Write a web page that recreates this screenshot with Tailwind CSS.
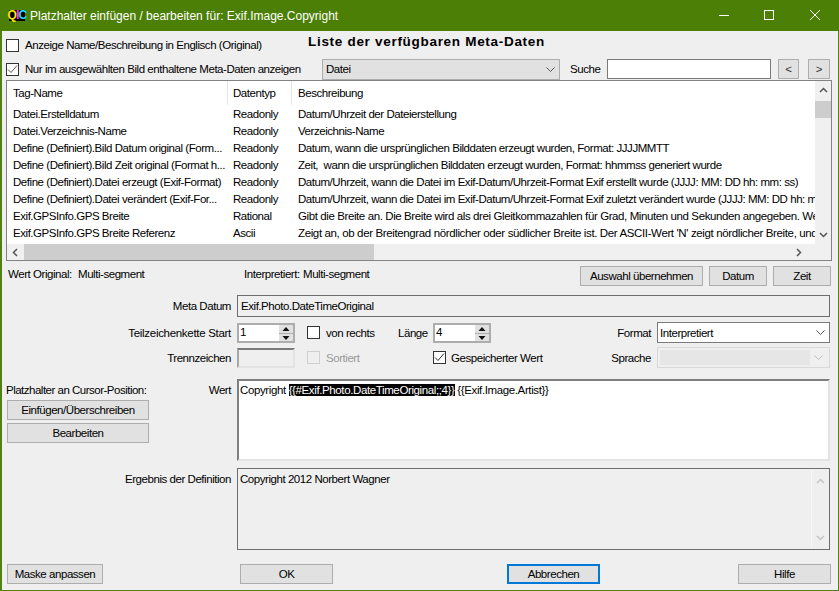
<!DOCTYPE html>
<html lang="de">

<head>
    <meta charset="UTF-8">
    <title>Platzhalter einfügen / bearbeiten</title>
    <script src="https://cdn.jsdelivr.net/npm/@tailwindcss/browser@4"></script>
</head>

<body class="w-[839px] h-[591px] overflow-hidden bg-[#efefef] font-['Liberation_Sans',sans-serif] text-[11.500px] tracking-[-0.45px] leading-[14px] text-black whitespace-nowrap">
    <div class="w-[839px] h-[591px] flex flex-col border-x border-b border-[#4f8211] border-l-2">
        <!-- Title bar -->
        <div class="h-[31px] -ml-[2px] -mr-px bg-[#4b7f05] flex items-center text-white shrink-0 tracking-normal">
            <div class="ml-[9px] w-[16px] h-[11px] bg-black flex items-center justify-center font-bold text-[12px] leading-[11px] tracking-[-0.8px]">
                <span class="text-[#ffe600]">Q</span><span class="text-[#ff3fd0]">I</span><span class="text-[#27d8ff]">C</span>
            </div>
            <span class="ml-[5px] text-[12px]">Platzhalter einfügen / bearbeiten für: Exif.Image.Copyright</span>
            <div class="ml-auto flex items-center">
                <svg class="w-[46px] h-[31px]" viewBox="0 0 46 31"><path d="M18 15.500h10" stroke="#fff" /></svg>
                <svg class="w-[46px] h-[31px]" viewBox="0 0 46 31"><rect x="17.500" y="10.500" width="9" height="9" fill="none" stroke="#fff" /></svg>
                <svg class="w-[46px] h-[31px]" viewBox="0 0 46 31"><path d="M17 10l10 10M27 10l-10 10" stroke="#fff" /></svg>
            </div>
        </div>

        <!-- Top options -->
        <div class="h-[27px] flex items-center pl-[4px] shrink-0">
            <span class="w-[13px] h-[13px] border border-[#333] bg-white mt-[1px] shrink-0"></span>
            <span class="ml-[6px] w-[283px] shrink-0">Anzeige Name/Beschreibung in Englisch (Original)</span>
            <span class="font-bold text-[13.500px] tracking-[0.7px] -mt-[5px]">Liste der verfügbaren Meta-Daten</span>
        </div>
        <div class="h-[22px] flex items-center pl-[4px] shrink-0 *:shrink-0">
            <span class="w-[13px] h-[13px] border border-[#333] bg-white flex items-center justify-center">
                <svg class="w-[11px] h-[11px]" viewBox="0 0 11 11"><path d="M1 5.500l3 3 6-7" fill="none" stroke="#555" /></svg>
            </span>
            <span class="ml-[6px] w-[297px]">Nur im ausgewählten Bild enthaltene Meta-Daten anzeigen</span>
            <div class="w-[238px] h-[21px] bg-[#e1e1e1] border border-[#adadad] flex items-center justify-between pl-[3px] pr-[4px]">
                <span>Datei</span>
                <svg class="w-[9px] h-[5px]" viewBox="0 0 9 5"><path d="M0.500 0.500l4 4 4-4" fill="none" stroke="#555" /></svg>
            </div>
            <span class="ml-[10px] w-[37px]">Suche</span>
            <div class="w-[164px] h-[20px] bg-white border border-[#7a7a7a]"></div>
            <button class="ml-[7px] w-[21px] h-[20px] bg-[#e1e1e1] border border-[#adadad] text-[#333]">&lt;</button>
            <button class="ml-[9px] w-[22px] h-[20px] bg-[#e1e1e1] border border-[#adadad] text-[#333]">&gt;</button>
        </div>

        <!-- Tag list -->
        <div class="ml-[4px] w-[826px] h-[181px] border border-[#828282] flex flex-col shrink-0">
            <div class="flex h-[163px]">
                <div class="w-[808px] bg-white overflow-hidden">
                    <div class="flex h-[24px] items-center *:shrink-0">
                        <div class="w-[221px] h-full pl-[6px] flex items-center border-r border-[#e5e5e5]">Tag-Name</div>
                        <div class="w-[64px] h-full pl-[5px] flex items-center border-r border-[#e5e5e5]">Datentyp</div>
                        <div class="pl-[6px]">Beschreibung</div>
                    </div>
                    <div class="flex h-[17px] items-center *:shrink-0"><span class="w-[220px] pl-[6px]">Datei.Erstelldatum</span><span class="w-[65px] pl-[6px]">Readonly</span><span class="pl-[6px]">Datum/Uhrzeit der Dateierstellung</span></div>
                    <div class="flex h-[17px] items-center *:shrink-0"><span class="w-[220px] pl-[6px]">Datei.Verzeichnis-Name</span><span class="w-[65px] pl-[6px]">Readonly</span><span class="pl-[6px]">Verzeichnis-Name</span></div>
                    <div class="flex h-[17px] items-center *:shrink-0"><span class="w-[220px] pl-[6px]">Define (Definiert).Bild Datum original (Form...</span><span class="w-[65px] pl-[6px]">Readonly</span><span class="pl-[6px]">Datum, wann die ursprünglichen Bilddaten erzeugt wurden, Format: JJJJMMTT</span></div>
                    <div class="flex h-[17px] items-center *:shrink-0"><span class="w-[220px] pl-[6px]">Define (Definiert).Bild Zeit original (Format h...</span><span class="w-[65px] pl-[6px]">Readonly</span><span class="pl-[6px] whitespace-pre">Zeit,  wann die ursprünglichen Bilddaten erzeugt wurden, Format: hhmmss generiert wurde</span></div>
                    <div class="flex h-[17px] items-center *:shrink-0"><span class="w-[220px] pl-[6px]">Define (Definiert).Datei erzeugt (Exif-Format)</span><span class="w-[65px] pl-[6px]">Readonly</span><span class="pl-[6px]">Datum/Uhrzeit, wann die Datei im Exif-Datum/Uhrzeit-Format Exif erstellt wurde (JJJJ: MM: DD hh: mm: ss)</span></div>
                    <div class="flex h-[17px] items-center *:shrink-0"><span class="w-[220px] pl-[6px]">Define (Definiert).Datei verändert (Exif-For...</span><span class="w-[65px] pl-[6px]">Readonly</span><span class="pl-[6px]">Datum/Uhrzeit, wann die Datei im Exif-Datum/Uhrzeit-Format Exif zuletzt verändert wurde (JJJJ: MM: DD hh: mm: ss)</span></div>
                    <div class="flex h-[17px] items-center *:shrink-0"><span class="w-[220px] pl-[6px]">Exif.GPSInfo.GPS Breite</span><span class="w-[65px] pl-[6px]">Rational</span><span class="pl-[6px] tracking-[-0.4px]">Gibt die Breite an. Die Breite wird als drei Gleitkommazahlen für Grad, Minuten und Sekunden angegeben. Wenn</span></div>
                    <div class="flex h-[17px] items-center *:shrink-0"><span class="w-[220px] pl-[6px]">Exif.GPSInfo.GPS Breite Referenz</span><span class="w-[65px] pl-[6px]">Ascii</span><span class="pl-[6px] tracking-[-0.37px]">Zeigt an, ob der Breitengrad nördlicher oder südlicher Breite ist. Der ASCII-Wert 'N' zeigt nördlicher Breite, und 'S'</span></div>
                </div>
                <!-- vertical scrollbar -->
                <div class="w-[16px] bg-[#f0f0f0] flex flex-col items-center">
                    <svg class="mt-[6px] w-[9px] h-[6px]" viewBox="0 0 9 6"><path d="M1 5l3.500-3.500L8 5" fill="none" stroke="#555" stroke-width="1.500" /></svg>
                    <div class="mt-[8px] w-full h-[17px] bg-[#cdcdcd]"></div>
                    <svg class="mt-auto mb-[6px] w-[9px] h-[6px]" viewBox="0 0 9 6"><path d="M1 1l3.500 3.500L8 1" fill="none" stroke="#555" stroke-width="1.500" /></svg>
                </div>
            </div>
            <!-- horizontal scrollbar -->
            <div class="h-[16px] bg-[#f0f0f0] flex items-center">
                <svg class="w-[17px] h-[9px]" viewBox="0 0 17 9"><path d="M10 1L6.500 4.500 10 8" fill="none" stroke="#555" stroke-width="1.500" /></svg>
                <div class="w-[350px] h-full bg-[#cdcdcd]"></div>
                <svg class="ml-[416px] w-[17px] h-[9px]" viewBox="0 0 17 9"><path d="M7 1l3.500 3.500L7 8" fill="none" stroke="#555" stroke-width="1.500" /></svg>
            </div>
        </div>

        <!-- Current value -->
        <div class="mt-[5px] h-[20px] flex items-center shrink-0 *:shrink-0">
            <span class="ml-[6px] w-[70px] -mt-[4px]">Wert Original:</span>
            <span class="w-[166px] -mt-[4px]">Multi-segment</span>
            <span class="w-[59px] -mt-[4px]">Interpretiert:</span>
            <span class="w-[277px] -mt-[4px]">Multi-segment</span>
            <button class="w-[123px] h-[20px] bg-[#e1e1e1] border border-[#adadad]">Auswahl übernehmen</button>
            <button class="ml-[6px] w-[58px] h-[20px] bg-[#e1e1e1] border border-[#adadad]">Datum</button>
            <button class="ml-[6px] w-[58px] h-[20px] bg-[#e1e1e1] border border-[#adadad]">Zeit</button>
        </div>

        <!-- Definition fields -->
        <div class="mt-[9px] h-[22px] flex items-center shrink-0 *:shrink-0">
            <span class="w-[229px] text-right">Meta Datum</span>
            <div class="ml-[6px] w-[593px] h-[22px] border border-[#6e6e6e] flex items-center pl-[3px]">Exif.Photo.DateTimeOriginal</div>
        </div>
        <div class="mt-[5px] h-[21px] flex items-center shrink-0 *:shrink-0">
            <span class="w-[229px] text-right tracking-[-0.3px]">Teilzeichenkette Start</span>
            <div class="ml-[6px] w-[58px] h-[20px] bg-white border-2 border-[#adadad] flex justify-between pl-[1px]">
                <span>1</span>
                <div class="w-[14px] flex flex-col gap-px bg-[#adadad]">
                    <svg class="w-full h-[8px] bg-[#e1e1e1]" viewBox="0 0 14 8"><path d="M3.500 6l3.500-4 3.500 4z" fill="#111" /></svg>
                    <svg class="w-full h-[7px] bg-[#e1e1e1]" viewBox="0 0 14 7"><path d="M3.500 2l3.500 4 3.500-4z" fill="#111" /></svg>
                </div>
            </div>
            <span class="ml-[12px] w-[13px] h-[13px] border border-[#333] bg-white"></span>
            <span class="ml-[6px] w-[72px]">von rechts</span>
            <span class="w-[35px]">Länge</span>
            <div class="w-[58px] h-[20px] bg-white border-2 border-[#adadad] flex justify-between pl-[1px]">
                <span>4</span>
                <div class="w-[14px] flex flex-col gap-px bg-[#adadad]">
                    <svg class="w-full h-[8px] bg-[#e1e1e1]" viewBox="0 0 14 8"><path d="M3.500 6l3.500-4 3.500 4z" fill="#111" /></svg>
                    <svg class="w-full h-[7px] bg-[#e1e1e1]" viewBox="0 0 14 7"><path d="M3.500 2l3.500 4 3.500-4z" fill="#111" /></svg>
                </div>
            </div>
            <span class="w-[160px] text-right">Format</span>
            <div class="ml-[6px] w-[173px] h-[21px] bg-white border border-[#7a7a7a] flex items-center justify-between pl-[2px] pr-[4px]">
                <span>Interpretiert</span>
                <svg class="w-[9px] h-[5px]" viewBox="0 0 9 5"><path d="M0.500 0.500l4 4 4-4" fill="none" stroke="#555" /></svg>
            </div>
        </div>
        <div class="mt-[4px] h-[21px] flex items-center shrink-0 *:shrink-0">
            <span class="w-[229px] text-right">Trennzeichen</span>
            <div class="ml-[6px] w-[58px] h-[20px] bg-[#efefef] border-2 border-t-[#7a7a7a] border-l-[#a8a8a8] border-r-[#e3e3e3] border-b-[#e3e3e3]"></div>
            <span class="ml-[12px] w-[13px] h-[13px] border border-[#cfcfcf] bg-[#efefef]"></span>
            <span class="ml-[6px] w-[107px] text-[#9a9a9a]">Sortiert</span>
            <span class="w-[13px] h-[13px] border border-[#333] bg-white flex items-center justify-center">
                <svg class="w-[11px] h-[11px]" viewBox="0 0 11 11"><path d="M1 5.500l3 3 6-7" fill="none" stroke="#333" /></svg>
            </span>
            <span class="ml-[5px] w-[121px]">Gespeicherter Wert</span>
            <span class="w-[79px] text-right">Sprache</span>
            <div class="ml-[6px] w-[173px] h-[21px] border border-[#d9d9d9] flex items-center justify-between pl-[2px] pr-[6px]">
                <span class="w-[150px] h-[15px] bg-[#e6e6e6]"></span>
                <svg class="w-[9px] h-[5px]" viewBox="0 0 9 5"><path d="M0.500 0.500l4 4 4-4" fill="none" stroke="#bbb" /></svg>
            </div>
        </div>

        <!-- Value editor -->
        <div class="mt-[11px] h-[82px] flex shrink-0">
            <div class="w-[229px] flex shrink-0">
                <div class="w-[146px] pl-[4px] flex flex-col">
                    <span class="mt-[4px] tracking-[-0.5px]">Platzhalter an Cursor-Position:</span>
                    <button class="mt-[3px] ml-[1px] w-[142px] h-[20px] bg-[#e1e1e1] border border-[#adadad]">Einfügen/Überschreiben</button>
                    <button class="mt-[3px] ml-[1px] w-[142px] h-[20px] bg-[#e1e1e1] border border-[#adadad]">Bearbeiten</button>
                </div>
                <span class="flex-1 mt-[4px] text-right">Wert</span>
            </div>
            <div class="ml-[6px] w-[593px] h-[82px] bg-white border-2 border-[#7f7f7f] border-r-[#e3e3e3] border-b-[#e3e3e3] px-[1px] pt-[2px] tracking-[-0.38px]">Copyright <span class="bg-black text-white">{{#Exif.Photo.DateTimeOriginal;;4}}</span> {{Exif.Image.Artist}}</div>
        </div>
        <div class="mt-[7px] h-[82px] flex shrink-0">
            <span class="w-[229px] mt-[4px] text-right shrink-0">Ergebnis der Definition</span>
            <div class="ml-[6px] w-[593px] h-[82px] border border-[#6e6e6e] flex justify-between">
                <span class="pl-[2px] pt-[3px]">Copyright 2012 Norbert Wagner</span>
                <div class="w-[18px] border-l border-[#f8f8f8] flex flex-col items-center mt-[1px]">
                    <svg class="mt-[8px] w-[9px] h-[6px]" viewBox="0 0 9 6"><path d="M1 5l3.500-3.500L8 5" fill="none" stroke="#c4c4c4" stroke-width="1.500" /></svg>
                    <svg class="mt-auto mb-[8px] w-[9px] h-[6px]" viewBox="0 0 9 6"><path d="M1 1l3.500 3.500L8 1" fill="none" stroke="#c4c4c4" stroke-width="1.500" /></svg>
                </div>
            </div>
        </div>

        <!-- Bottom buttons -->
        <div class="mt-[14px] h-[20px] flex items-center shrink-0 *:shrink-0">
            <button class="ml-[5px] w-[96px] h-[20px] bg-[#e1e1e1] border border-[#adadad]">Maske anpassen</button>
            <button class="ml-[137px] w-[93px] h-[20px] bg-[#e1e1e1] border border-[#adadad]">OK</button>
            <button class="ml-[174px] w-[93px] h-[20px] bg-[#e1e1e1] border-2 border-[#0078d7]">Abbrechen</button>
            <button class="ml-[138px] w-[93px] h-[20px] bg-[#e1e1e1] border border-[#adadad]">Hilfe</button>
        </div>
    </div>
</body>

</html>
